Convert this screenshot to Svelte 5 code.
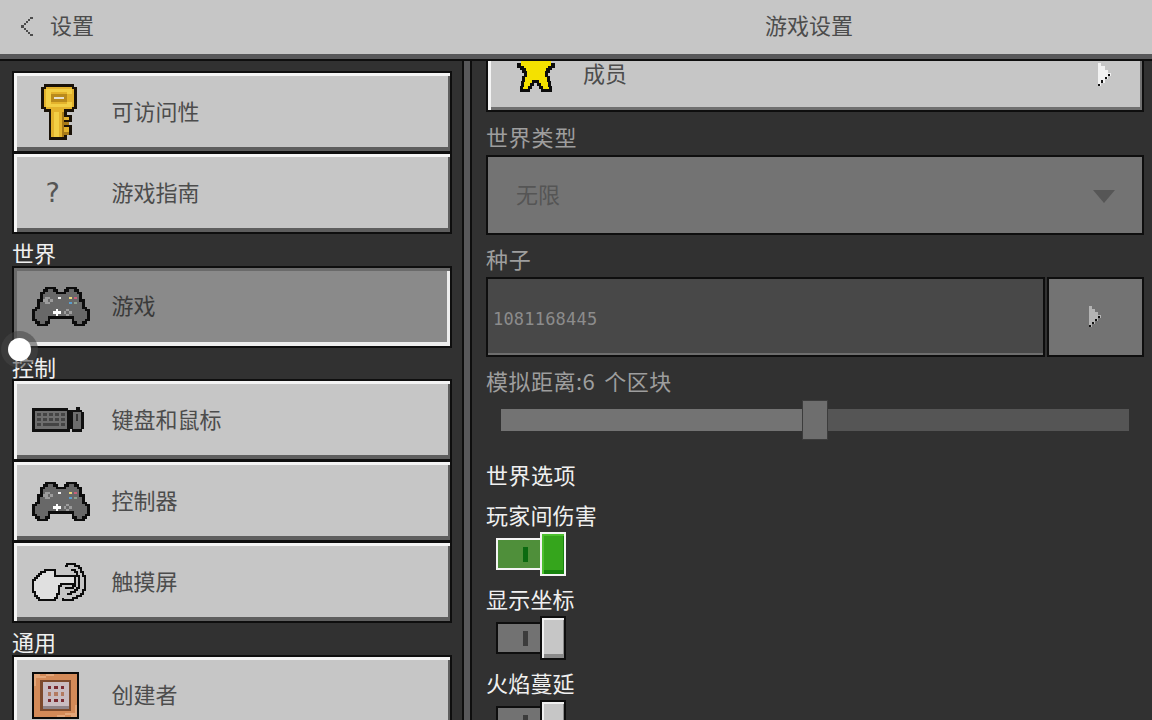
<script lang="ts">
  const sideTop = [
    { label: '可访问性', icon: 'key' },
    { label: '游戏指南', icon: 'help' }
  ];
  const sideControls = [
    { label: '键盘和鼠标', icon: 'keyboard' },
    { label: '控制器', icon: 'pad' },
    { label: '触摸屏', icon: 'touch' }
  ];
  const toggles = [
    { label: '玩家间伤害', on: true },
    { label: '显示坐标', on: false },
    { label: '火焰蔓延', on: false }
  ];
</script>

{#snippet icon(name: string)}
  {#if name === 'key'}
    <svg class="ic-key" viewBox="0 0 14 22" shape-rendering="crispEdges">
      <path d="M1.500.5H12.500V1.500H13.500V9.500H12.500V10.500H9.500V12.500H11.500V14.500H9.500V16.500H11.500V19.500H9.500V21.500H3.500V10.500H1.500V9.500H.5V1.500H1.500Z" fill="#e3b22c" stroke="#1a1208" />
      <path d="M2 2H12V4H10V3H4V8H10V7H12V9H2ZM5 11H7V21H5Z" fill="#f3cf45" />
      <path d="M4 4H10V7H4Z" fill="#b98a1c" />
      <path d="M5 5H9V6H5Z" fill="#e6e0d0" />
      <path d="M8 11H9V21H8ZM9 15H11V16H9ZM9 19H11V20H9Z" fill="#a87a16" />
    </svg>
  {:else if name === 'help'}
    <span class="ic-help">?</span>
  {:else if name === 'pad'}
    <svg class="ic-pad" viewBox="1 0 22 16" preserveAspectRatio="none" shape-rendering="crispEdges">
      <path d="M6.500.5H9.500V1.500H10.500V2.500H13.500V1.500H14.500V.5H17.500V1.500H18.500V2.500H19.500V5.500H20.500V8.500H21.500V9.500H22.500V13.500H21.500V14.500H20.500V15.500H17.500V14.500H16.500V12.500H7.500V14.500H6.500V15.500H3.500V14.500H2.500V13.500H1.500V9.500H2.500V8.500H3.500V5.500H4.500V2.500H5.500V1.500H6.500Z" fill="#686868" stroke="#0c0c0c" />
      <path d="M9 10H10V9H11V10H12V11H11V12H10V11H9Z" fill="#fff" />
      <path d="M6 4H8V5H9V6H8V7H6V6H5V5H6Z M14 9H15V10H16V11H15V12H14V11H13V10H14Z" fill="#9c9c9c" />
      <rect x="7" y="5" width="1" height="1" fill="#686868" />
      <rect x="14" y="10" width="1" height="1" fill="#686868" />
      <rect x="11" y="4" width="1" height="1" fill="#efefef" />
      <rect x="15" y="4" width="1" height="1" fill="#e8d77a" />
      <rect x="17" y="4" width="1" height="1" fill="#c8607a" />
      <rect x="15" y="6" width="1" height="1" fill="#5a9fd0" />
      <rect x="17" y="6" width="1" height="1" fill="#8ea08e" />
    </svg>
  {:else if name === 'keyboard'}
    <svg class="ic-kb" viewBox="0 0 52 26" shape-rendering="crispEdges">
      <path d="M0 1H36V3H38V25H0Z" fill="#111" />
      <path d="M3 4H35V22H3Z" fill="#6e6e6e" />
      <path d="M5 6H9V9H5ZM11 6H15V9H11ZM17 6H21V9H17ZM23 6H27V9H23ZM29 6H33V9H29ZM5 11H9V14H5ZM11 11H15V14H11ZM17 11H21V14H17ZM23 11H27V14H23ZM29 11H33V14H29ZM5 16H9V19H5ZM11 16H27V19H11ZM29 16H33V19H29Z" fill="#444" />
      <path d="M38 3H44V0H48V3H50V5H52V22H50V25H40V22H38Z" fill="#111" />
      <path d="M41 5H49V22H41Z" fill="#6e6e6e" />
      <path d="M44 7H46V14H44Z" fill="#333" />
    </svg>
  {:else if name === 'touch'}
    <svg class="ic-touch" viewBox="0 0 28 19" shape-rendering="crispEdges">
      <path d="M6.500 3.500H11.500V6.500H21.500V10.500H14.500V11.500H13.500V15.500H12.500V17.500H11.500V18.500H3.500V17.500H2.500V16.500H1.500V14.500H.5V8.500H1.500V7.500H2.500V6.500H3.500V5.500H4.500V4.500H6.500Z" fill="#e0e0e0" stroke="#0c0c0c" />
      <path d="M16.500 1.500H17.500V.5H21.500V1.500H23.500V2.500H24.500V4.500H25.500V6.500H26.500V13.500H25.500V15.500H24.500V16.500H22.500V17.500H20.500V18.500H15.500V17.500M19.500 3.500H21.500V4.500H22.500V6.500H23.500V12.500H22.500V13.500H21.500V14.500H19.500V15.500H17.500M21.500 10.500V11.500H20.500V12.500H16.500" fill="none" stroke="#0c0c0c" />
    </svg>
  {:else if name === 'block'}
    <svg class="ic-block" viewBox="0 0 46 46" shape-rendering="crispEdges">
      <rect width="46" height="46" fill="#0a0a0a" />
      <rect x="2" y="2" width="42" height="42" fill="#d38a58" />
      <path d="M2 2H8V4H14V2H22V4H14V6H4V14H2ZM44 44H38V42H32V44H24V42H32V40H42V32H44Z" fill="#e3a679" />
      <rect x="8" y="8" width="30" height="30" fill="#7d4a2c" />
      <rect x="11" y="10" width="25" height="26" fill="#c9bcc0" />
      <rect x="11" y="33" width="25" height="3" fill="#8f8488" />
      <path d="M16 14H19V17H16ZM22 14H25V17H22ZM28 14H31V17H28ZM16 26H19V29H16ZM22 26H25V29H22ZM28 26H31V29H28Z" fill="#7a2a30" />
      <path d="M16 20H19V23H16ZM28 20H31V23H28ZM22 20H25V23H22Z" fill="#b37a60" />
    </svg>
  {/if}
{/snippet}

{#snippet sideButton(label: string, name: string, active = false)}
  <button class="side-btn" class:active>
    <span class="side-icon">{@render icon(name)}</span>
    <span class="side-label">{label}</span>
  </button>
{/snippet}

<div class="screen">
  <header class="topbar">
    <div class="top-left">
      <svg class="back" viewBox="0 0 12 19" shape-rendering="crispEdges">
        <path d="M9 0H12V2H9V4H7V6H5V8H3V11H5V13H7V15H9V17H12V19H9V17H7V15H5V13H3V11H0V8H3V6H5V4H7V2H9Z" fill="#4c4c4c" />
      </svg>
      <span class="top-text">设置</span>
    </div>
    <div class="top-title">游戏设置</div>
  </header>

  <div class="body">
    <aside class="side">
      {#each sideTop as item}
        {@render sideButton(item.label, item.icon)}
      {/each}

      <div class="side-head">世界</div>
      {@render sideButton('游戏', 'pad', true)}

      <div class="side-head">控制</div>
      {#each sideControls as item}
        {@render sideButton(item.label, item.icon)}
      {/each}

      <div class="side-head">通用</div>
      {@render sideButton('创建者', 'block')}
    </aside>

    <main class="panel">
      <button class="member">
        <svg class="star" viewBox="0 0 38 32" shape-rendering="crispEdges">
          <path d="M0 2H38V7H35V9H33V12H31V15H33V20H34V25H35V31H24V28H22V25H20V22H17V25H15V28H13V31H3V25H4V20H5V15H7V12H5V9H3V7H0Z" fill="#0c0c0c" />
          <path d="M4 0H34V5H31V7H29V10H28V16H30V21H31V26H32V28H26V25H24V22H22V19H15V22H13V25H11V28H6V26H7V21H8V16H10V10H9V7H7V5H4Z" fill="#f4e100" />
        </svg>
        <span class="member-label">成员</span>
        <svg class="play" viewBox="0 0 12 22" shape-rendering="crispEdges">
          <path d="M0 0H3V3H6V6H9V9H12V12H9V15H6V18H3V21H0Z" fill="#f2f2f2" />
          <path d="M0 19H2V21H0ZM3 16H5V18H3ZM6 13H8V15H6ZM9 10H11V12H9Z" fill="#111" />
        </svg>
      </button>

      <div class="field-label first">世界类型</div>
      <div class="select">
        <span class="select-text">无限</span>
        <i class="caret"></i>
      </div>

      <div class="field-label">种子</div>
      <div class="seed">
        <div class="seed-input">1081168445</div>
        <div class="seed-btn">
          <svg class="play" viewBox="0 0 12 22" shape-rendering="crispEdges">
            <path d="M0 0H3V3H6V6H9V9H12V12H9V15H6V18H3V21H0Z" fill="#b4b4b4" />
            <path d="M0 19H2V21H0ZM3 16H5V18H3ZM6 13H8V15H6ZM9 10H11V12H9Z" fill="#111" />
          </svg>
        </div>
      </div>

      <div class="field-label distance">模拟距离:6  个区块</div>
      <div class="slider">
        <div class="slider-fill"></div>
        <div class="slider-thumb"></div>
        <div class="slider-rest"></div>
      </div>

      <div class="section">世界选项</div>

      {#each toggles as t}
        <div class="toggle-label">{t.label}</div>
        <div class="toggle" class:on={t.on}>
          <div class="toggle-track"><i></i></div>
          <div class="toggle-thumb"></div>
        </div>
      {/each}
    </main>
  </div>

  <div class="touch-dot"></div>
</div>

<style>
  :global(body) {
    margin: 0;
    background: #313131;
  }

  .screen {
    position: relative;
    width: 1152px;
    height: 720px;
    overflow: hidden;
    display: flex;
    flex-direction: column;
    background: #313131;
    font-family: "Noto Sans CJK SC", "Liberation Sans", sans-serif;
    font-size: 22px;
    line-height: 1;
  }

  .topbar {
    flex: none;
    height: 54px;
    display: flex;
    background: #c6c6c6;
    color: #4c4c4c;
    border-bottom: 5px solid #58585a;
    box-sizing: content-box;
  }

  .top-left {
    width: 470px;
    display: flex;
    align-items: center;
    gap: 17px;
    padding: 0 0 1px 21px;
    box-sizing: border-box;
  }

  .top-text {
    padding-bottom: 6px;
  }

  .back {
    width: 12px;
    height: 19px;
  }

  .top-title {
    flex: 1;
    padding: 0 4px 6px 0;
    display: flex;
    align-items: center;
    justify-content: center;
  }

  .body {
    flex: 1;
    min-height: 0;
    display: flex;
    background: #58585a;
    border-top: 2px solid #0e0e0e;
  }

  .side {
    flex: none;
    width: 464px;
    box-sizing: border-box;
    padding: 10px 10px 0 12px;
    background: #313131;
    border-right: 2px solid #0e0e0e;
    display: flex;
    flex-direction: column;
  }

  .side-btn {
    flex: none;
    height: 82px;
    margin-bottom: -1px;
    padding: 0;
    display: flex;
    align-items: center;
    border: 2px solid #0e0e0e;
    background: #c6c6c6;
    box-shadow: inset 3px 3px 0 #f4f4f4, inset -2px -4px 0 #5e5e5e;
    color: #4c4c4c;
    font: inherit;
    text-align: left;
  }

  .side-btn.active {
    background: #8a8a8a;
    box-shadow: inset 3px 3px 0 #6a6a6a, inset -3px -4px 0 #ededed;
    color: #3a3a3a;
  }

  .side-icon {
    width: 97.5px;
    flex: none;
    display: flex;
    align-items: center;
    padding-left: 18px;
    box-sizing: border-box;
  }

  .side-label {
    padding-bottom: 5px;
  }

  .side-head {
    flex: none;
    height: 32.5px;
    color: #f0f0f0;
    padding-top: 8px;
    box-sizing: border-box;
  }

  .ic-key { width: 36px; height: 56px; margin-left: 9px; }
  .ic-help { width: 41px; text-align: center; color: #555; font-family: "DejaVu Sans Mono", monospace; font-size: 27px; padding-bottom: 2px; }
  .ic-pad { width: 58px; height: 39px; flex: none; }
  .ic-kb { width: 52px; height: 26px; }
  .ic-touch { width: 56px; height: 38px; flex: none; }
  .ic-block { width: 47px; height: 47px; }

  .panel {
    flex: 1;
    min-width: 0;
    margin-left: 6px;
    padding: 0 8px 0 14px;
    background: #313131;
    border-left: 2px solid #0e0e0e;
    display: flex;
    flex-direction: column;
  }

  .member {
    flex: none;
    position: relative;
    height: 51px;
    padding: 0;
    display: flex;
    align-items: flex-start;
    border: 2px solid #0e0e0e;
    border-top: 0;
    background: #c6c6c6;
    box-shadow: inset 3px 0 0 #f4f4f4, inset -2px -3px 0 #707070;
    color: #4c4c4c;
    font: inherit;
  }

  .star {
    width: 38px;
    height: 32px;
    margin-left: 29px;
    flex: none;
  }

  .member-label {
    margin-left: 28px;
  }

  .member .play {
    position: absolute;
    right: 31px;
    top: 2px;
    width: 13px;
    height: 24px;
  }

  .play {
    width: 12px;
    height: 22px;
  }

  .field-label {
    flex: none;
    height: 42px;
    padding-top: 12px;
    box-sizing: border-box;
    color: #9e9e9e;
    letter-spacing: 0.8px;
    white-space: pre;
  }

  .first {
    height: 43px;
    padding-top: 13px;
  }

  .distance {
    letter-spacing: 0.5px;
    word-spacing: -1px;
  }

  .select {
    flex: none;
    height: 80px;
    box-sizing: border-box;
    border: 2px solid #0e0e0e;
    background: #737373;
    color: #555;
    display: flex;
    align-items: center;
    justify-content: space-between;
    padding: 0 27px 0 28px;
  }

  .select-text {
    padding-bottom: 5px;
  }

  .caret {
    width: 0;
    height: 0;
    margin-top: 2px;
    border-left: 11px solid transparent;
    border-right: 11px solid transparent;
    border-top: 13px solid #565656;
  }

  .seed {
    flex: none;
    height: 80px;
    display: flex;
    gap: 2px;
  }

  .seed-input {
    flex: 1;
    box-sizing: border-box;
    border: 2px solid #0e0e0e;
    background: #484848;
    box-shadow: inset 0 -2px 0 #6e6e6e;
    color: #8c8c8c;
    font-family: "DejaVu Sans Mono", monospace;
    font-size: 17px;
    letter-spacing: 0.2px;
    display: flex;
    align-items: center;
    padding: 4px 0 0 5px;
  }

  .seed-btn {
    flex: none;
    width: 97px;
    box-sizing: border-box;
    border: 2px solid #0e0e0e;
    background: #737373;
    display: flex;
    align-items: center;
    justify-content: center;
    padding-right: 2px;
  }

  .slider {
    flex: none;
    height: 42px;
    margin: 0 15px;
    display: flex;
    align-items: center;
  }

  .slider-fill {
    width: 301px;
    height: 22px;
    background: #737373;
  }

  .slider-thumb {
    flex: none;
    width: 24px;
    height: 38px;
    background: #6e6e6e;
    border: 1px solid #3c3c3c;
  }

  .slider-rest {
    flex: 1;
    height: 22px;
    background: #555;
  }

  .section {
    flex: none;
    height: 51px;
    padding-top: 22px;
    box-sizing: border-box;
    color: #f0f0f0;
    letter-spacing: 0.5px;
  }

  .toggle-label {
    flex: none;
    height: 40px;
    padding-top: 11px;
    box-sizing: border-box;
    color: #f0f0f0;
    letter-spacing: 0.2px;
  }

  .toggle {
    flex: none;
    height: 44px;
    margin-left: 10px;
    display: flex;
    align-items: center;
  }

  .toggle-track {
    position: relative;
    width: 44px;
    height: 32px;
    box-sizing: border-box;
    border: 2px solid #0e0e0e;
    border-right: 0;
    background: #727272;
  }

  .toggle-track i {
    position: absolute;
    left: 25px;
    top: 7px;
    width: 5px;
    height: 15px;
    background: #3c3c3c;
  }

  .toggle-thumb {
    width: 26px;
    height: 44px;
    box-sizing: border-box;
    border: 2px solid #0e0e0e;
    background: #c6c6c6;
    box-shadow: inset 2px 2px 0 #efefef, inset -1px -4px 0 #8a8a8a;
  }

  .toggle.on .toggle-track {
    border-color: #f4f4f4;
    background: #4f8f3a;
  }

  .toggle.on .toggle-track i {
    background: #0b6a10;
  }

  .toggle.on .toggle-thumb {
    border-color: #f4f4f4;
    background: #35a51c;
    box-shadow: inset 2px 2px 0 #4cc02e, inset -1px -4px 0 #17830e;
  }

  .touch-dot {
    position: absolute;
    left: 8px;
    top: 338px;
    width: 23px;
    height: 23px;
    border-radius: 50%;
    background: #fff;
    box-shadow: 0 0 0 7px rgba(70, 70, 70, 0.55);
  }
</style>
